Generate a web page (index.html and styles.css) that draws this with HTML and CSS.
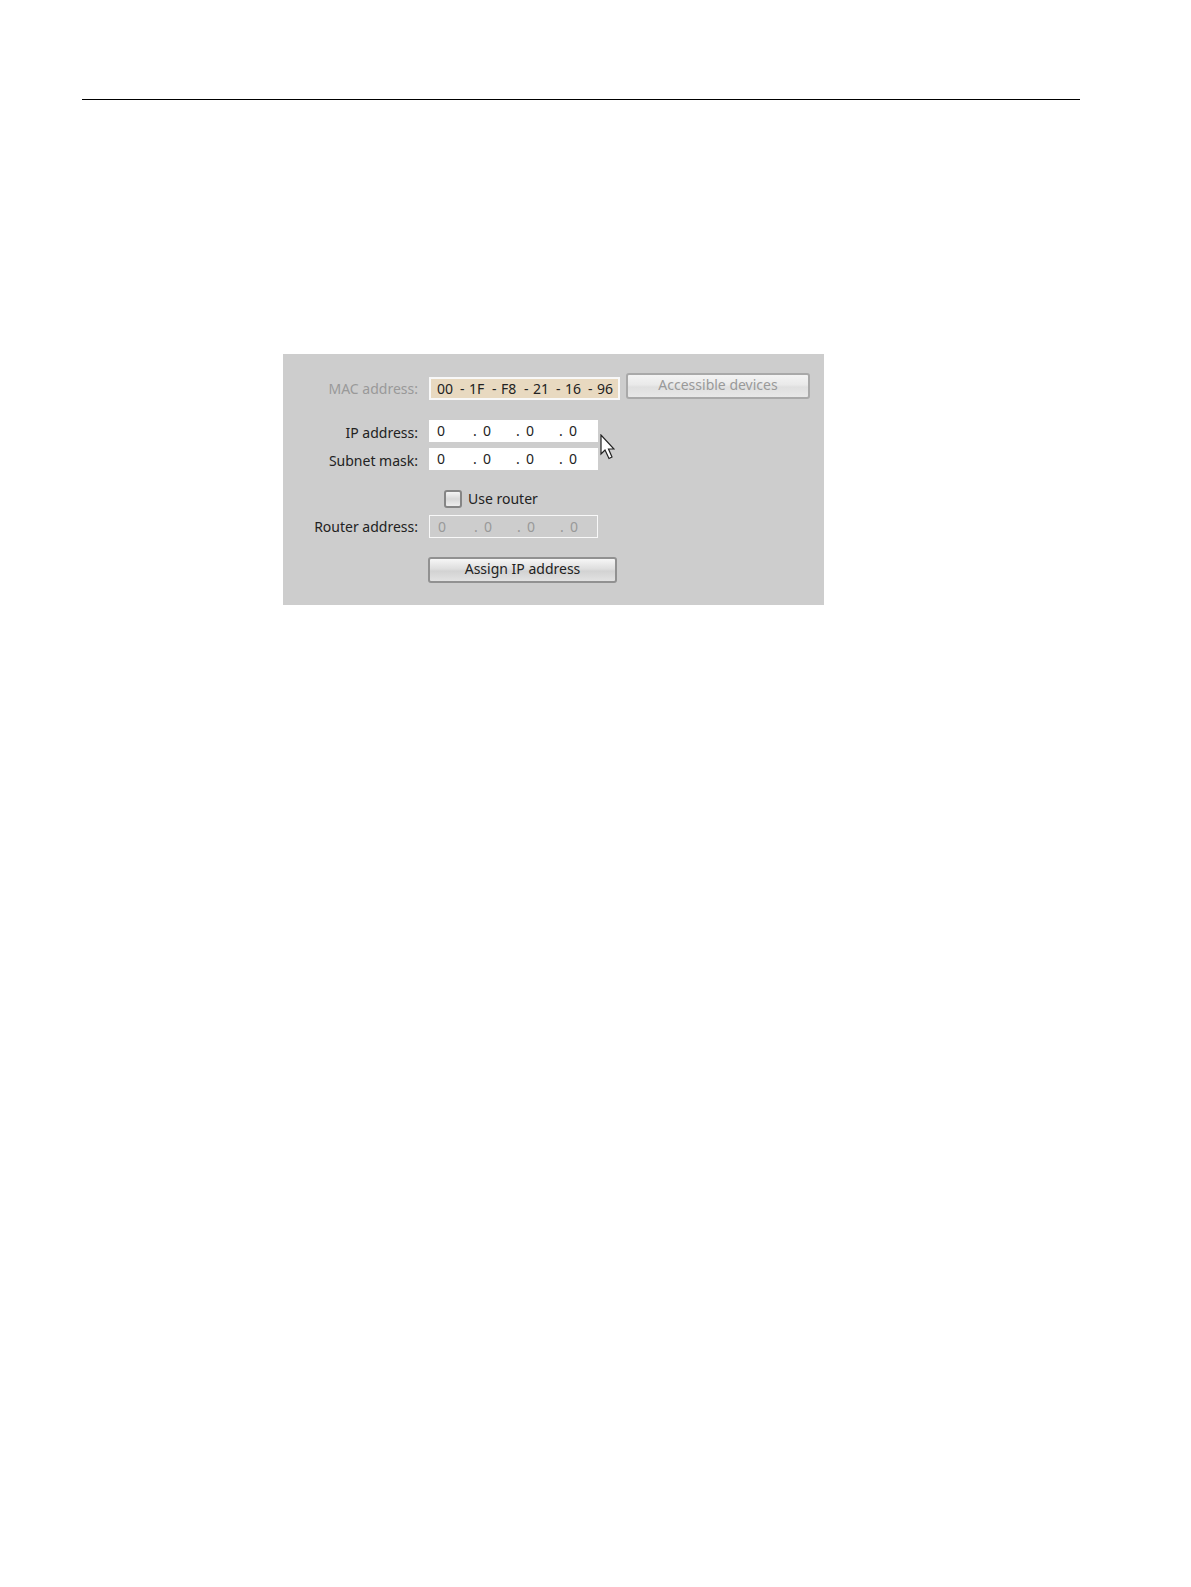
FILE: index.html
```
<!DOCTYPE html>
<html lang="en">
<head>
    <meta charset="UTF-8">
    <meta name="viewport" content="width=device-width, initial-scale=1.0">
    <title>Assign IP address</title>
    <link rel="stylesheet" href="styles.css">
</head>
<body>
    <hr class="rule">
    <form class="panel">
        <div class="row row-mac">
            <label class="name disabled" for="mac1">MAC address:</label>
            <div class="field mac">
                <input type="text" id="mac1" value="00" aria-label="MAC address">
                <span>-</span>
                <input type="text" value="1F" aria-label="MAC address part 2">
                <span>-</span>
                <input type="text" value="F8" aria-label="MAC address part 3">
                <span>-</span>
                <input type="text" value="21" aria-label="MAC address part 4">
                <span>-</span>
                <input type="text" value="16" aria-label="MAC address part 5">
                <span>-</span>
                <input type="text" value="96" aria-label="MAC address part 6">
            </div>
            <button type="button" class="btn btn-devices" disabled>Accessible devices</button>
        </div>
        <div class="row row-ip">
            <label class="name low" for="ip1">IP address:</label>
            <div class="field ip">
                <input type="text" id="ip1" value="0" aria-label="IP address">
                <span>.</span>
                <input type="text" value="0" aria-label="IP address part 2">
                <span>.</span>
                <input type="text" value="0" aria-label="IP address part 3">
                <span>.</span>
                <input type="text" value="0" aria-label="IP address part 4">
            </div>
            <!-- mouse pointer -->
            <svg class="pointer" width="15" height="26" viewBox="0 0 15 26">
                <path d="M1 1V20L5 16L9 24.5L12 23L8.500 15H14Z" fill="#fff" stroke="#222" stroke-width="1.200"/>
            </svg>
        </div>
        <div class="row row-mask">
            <label class="name low" for="mask1">Subnet mask:</label>
            <div class="field ip">
                <input type="text" id="mask1" value="0" aria-label="Subnet mask">
                <span>.</span>
                <input type="text" value="0" aria-label="Subnet mask part 2">
                <span>.</span>
                <input type="text" value="0" aria-label="Subnet mask part 3">
                <span>.</span>
                <input type="text" value="0" aria-label="Subnet mask part 4">
            </div>
        </div>
        <div class="row row-check">
            <input type="checkbox" class="check" id="router">
            <label for="router">Use router</label>
        </div>
        <div class="row row-router">
            <label class="name" for="router1">Router address:</label>
            <div class="field ip off">
                <input type="text" id="router1" value="0" aria-label="Router address" disabled>
                <span>.</span>
                <input type="text" value="0" aria-label="Router address part 2" disabled>
                <span>.</span>
                <input type="text" value="0" aria-label="Router address part 3" disabled>
                <span>.</span>
                <input type="text" value="0" aria-label="Router address part 4" disabled>
            </div>
        </div>
        <div class="row row-assign">
            <button type="button" class="btn btn-assign">Assign IP address</button>
        </div>
    </form>
</body>
</html>
```
FILE: styles.css
```
*{
    box-sizing: border-box;
    padding: 0;
    margin: 0;
}
body{
    padding: 99px 111px 0 82px;
    background-color: #fff;
    color: #222;
    font: 14px/20px "Noto Sans", "Open Sans", sans-serif;
}
input,
button{
    color: inherit;
    font: inherit;
}
.rule{
    border: none;
    border-top: 1px solid #000;
}
.panel{
    max-width: 541px;
    margin: 254px 0 0 201px;
    padding: 19px 14px 22px 0;
    background-color: #cdcdcd;
}
.row{
    display: flex;
    align-items: center;
    position: relative;
}
.row-mac{
    align-items: flex-end;
    height: 27px;
}
.row-ip{
    margin-top: 20px;
}
.row-mask{
    margin-top: 6px;
}
.row-check{
    margin-top: 19px;
    padding-left: 161px;
}
.row-router{
    margin-top: 6px;
}
.row-assign{
    margin-top: 19px;
    padding-left: 145px;
}
.name{
    width: 135px;
    margin-right: 11px;
    line-height: 22px;
    text-align: right;
}
.low{
    padding-top: 4px;
    line-height: 18px;
}
.disabled{
    color: #999;
}
.field{
    display: flex;
    align-items: center;
    height: 22px;
    padding-left: 8px;
    border: 0 solid #f8f8f8;
    background-color: #fff;
}
.field input,
.field span{
    flex: none;
}
.field input{
    height: 20px;
    border: none;
    outline: none;
    background: none;
}
.ip{
    width: 169px;
}
.ip input{
    width: 33px;
}
.ip input:first-child{
    width: 36px;
}
.ip input:last-child{
    width: 24px;
}
.ip span{
    width: 10px;
}
.mac{
    width: 191px;
    height: 23px;
    padding-left: 6px;
    border-width: 2px;
    background-color: #e8d9c0;
}
.mac input{
    width: 23px;
}
.mac input:last-child{
    width: 20px;
}
.mac span{
    width: 9px;
}
.off{
    height: 23px;
    border-width: 1px;
    background-color: #cdcdcd;
    color: #999;
}
.btn{
    height: 26px;
    padding-bottom: 2px;
    border: 2px solid #919191;
    border-radius: 3px;
    background: linear-gradient(#f6f6f6, #dedede 45%, #d2d2d2 55%, #e2e2e2);
    line-height: 20px;
}
.btn:disabled{
    border-color: #a9a9a9;
    background: linear-gradient(#f4f4f4, #e9e9e9 45%, #dfdfdf 55%, #e8e8e8);
    color: #999;
}
.btn-devices{
    flex: 1;
    align-self: flex-start;
    margin-left: 6px;
}
.btn-assign{
    width: 189px;
}
.check{
    appearance: none;
    width: 18px;
    height: 18px;
    margin-right: 6px;
    border: 2px solid #858585;
    border-radius: 3px;
    background: linear-gradient(#f4f4f4, #d8d8d8 50%, #eee);
}
.check:checked{
    background: #666;
}
.pointer{
    position: absolute;
    top: 14px;
    left: 317px;
}
```
